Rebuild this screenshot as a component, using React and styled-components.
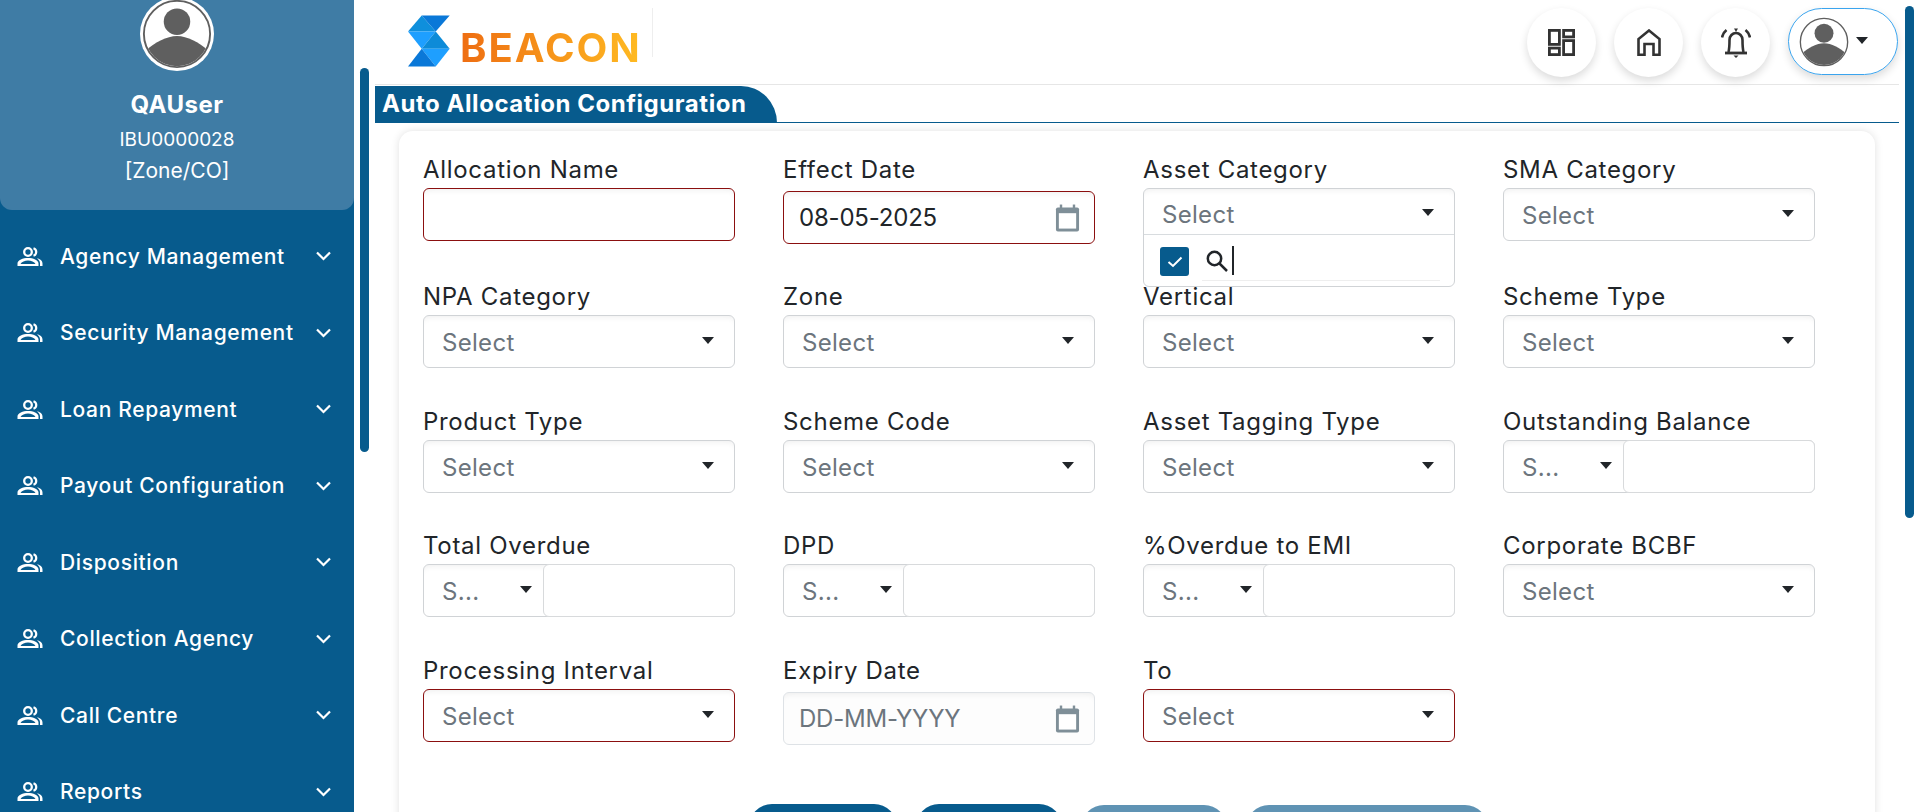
import styled, { createGlobalStyle } from "styled-components";

const GlobalStyle = createGlobalStyle`
  html, body { margin: 0; padding: 0; height: 100%; overflow: hidden; background: #fff; }
  body { font-family: Inter, "Noto Sans", sans-serif; color: #212529; }
`;

const BLUE = "#075b8d";
const RED = "#8b0f0f";

const menuItems = [
  "Agency Management",
  "Security Management",
  "Loan Repayment",
  "Payout Configuration",
  "Disposition",
  "Collection Agency",
  "Call Centre",
  "Reports",
];

const fields = [
  { label: "Allocation Name", kind: "text", required: true },
  { label: "Effect Date", kind: "date", value: "08-05-2025", required: true },
  { label: "Asset Category", kind: "open" },
  { label: "SMA Category" },
  { label: "NPA Category" },
  { label: "Zone" },
  { label: "Vertical" },
  { label: "Scheme Type" },
  { label: "Product Type" },
  { label: "Scheme Code" },
  { label: "Asset Tagging Type" },
  { label: "Outstanding Balance", kind: "combo" },
  { label: "Total Overdue", kind: "combo" },
  { label: "DPD", kind: "combo" },
  { label: "%Overdue to EMI", kind: "combo" },
  { label: "Corporate BCBF" },
  { label: "Processing Interval", required: true },
  { label: "Expiry Date", kind: "date", placeholder: "DD-MM-YYYY" },
  { label: "To", required: true },
];

// the labels of these buttons sit below the fold
const buttons = [
  { width: 148 },
  { width: 146 },
  { width: 146, faded: true },
  { width: 242, faded: true },
];

const Page = styled.div`
  display: flex;
  width: 1920px;
  height: 812px;
  overflow: hidden;
`;

const Sidebar = styled.aside`
  width: 354px;
  flex: none;
  height: 812px;
  background: ${BLUE};
  color: #fff;
  overflow: hidden;
`;

const Profile = styled.div`
  height: 210px;
  background: #3f7ca5;
  border-radius: 0 0 12px 12px;
  display: flex;
  flex-direction: column;
  align-items: center;
`;

const AvatarRing = styled.div`
  width: 74px;
  height: 74px;
  border-radius: 50%;
  background: #fff;
  display: flex;
  align-items: center;
  justify-content: center;
  margin: -3px 0 19px;
  flex: none;
`;

const UserName = styled.div`
  font-size: 24px;
  font-weight: 700;
  line-height: 30px;
  letter-spacing: 0.5px;
`;

const UserCode = styled.div`
  font-size: 19px;
  line-height: 30px;
  margin-top: 5px;
`;

const UserZone = styled.div`
  font-size: 21px;
  line-height: 30px;
  margin-top: 1px;
`;

const Menu = styled.nav`
  display: flex;
  flex-direction: column;
  padding-top: 8px;
`;

const MenuItem = styled.div`
  height: 76.5px;
  display: flex;
  align-items: center;
  padding: 0 23px 0 17px;
  flex: none;
`;

const MenuLabel = styled.span`
  flex: 1;
  font-size: 21px;
  font-weight: 500;
  letter-spacing: 0.65px;
  margin-left: 17px;
  white-space: nowrap;
`;

const Rail = styled.div`
  width: 9px;
  flex: none;
  margin-left: 6px;
  padding-top: ${(p) => p.$top}px;
`;

const Thumb = styled.div`
  width: 9px;
  height: ${(p) => p.$height}px;
  border-radius: 5px;
  background: ${BLUE};
`;

const Content = styled.div`
  width: 1524px;
  flex: none;
  margin-left: 6px;
`;

const Header = styled.header`
  height: 85px;
  border-bottom: 1px solid #e6e6e6;
  display: flex;
  align-items: flex-start;
  justify-content: space-between;
  box-sizing: border-box;
  padding: 8px 1px 0 33px;
`;

const Logo = styled.div`
  display: flex;
  align-items: flex-end;
  height: 59px;
`;

const LogoMark = styled.svg`
  flex: none;
  display: block;
`;

const LogoText = styled.span`
  font-size: 40px;
  line-height: 30px;
  font-weight: 700;
  letter-spacing: 2px;
  margin: 0 10px 4px 10px;
  background: linear-gradient(90deg, #ee6d12, #ffbb22);
  -webkit-background-clip: text;
  background-clip: text;
  color: transparent;
`;

const LogoDivider = styled.span`
  width: 1px;
  height: 49px;
  align-self: flex-start;
  background: #eee;
`;

const HeaderActions = styled.div`
  display: flex;
  align-items: flex-start;
  gap: 18px;
`;

const RoundButton = styled.div`
  width: 69px;
  height: 69px;
  border-radius: 50%;
  background: #fff;
  box-shadow: 0 4px 8px rgba(0, 0, 0, 0.14);
  display: flex;
  align-items: center;
  justify-content: center;
`;

const UserButton = styled.div`
  width: 110px;
  height: 67px;
  border-radius: 34px;
  border: 1px solid #3aa4ee;
  box-shadow: 0 4px 8px rgba(0, 0, 0, 0.14);
  display: flex;
  align-items: center;
  padding-left: 10px;
  box-sizing: border-box;
  gap: 7px;
`;

const TitleBar = styled.div`
  height: 37px;
  margin-top: 1px;
  border-bottom: 1px solid ${BLUE};
  box-sizing: border-box;
  display: flex;
`;

const TitleTab = styled.h1`
  margin: 0;
  height: 37px;
  width: 402px;
  flex: none;
  box-sizing: border-box;
  background: ${BLUE};
  color: #fff;
  font-size: 24px;
  line-height: 35px;
  font-weight: 700;
  letter-spacing: 0.55px;
  padding-left: 7px;
  border-top-right-radius: 36px 37px;
  white-space: nowrap;
`;

const Card = styled.section`
  width: 1476px;
  margin: 8px 0 0 24px;
  height: 700px;
  box-sizing: border-box;
  background: #fff;
  border-radius: 14px;
  box-shadow: 0 0 8px rgba(0, 0, 0, 0.12);
  padding: 24px 24px 0;
`;

const FieldGrid = styled.div`
  display: grid;
  grid-template-columns: repeat(4, 312px);
  grid-template-rows: 127px 125px 124px 125px 125px;
  column-gap: 48px;
`;

const Field = styled.div`
  display: flex;
  flex-direction: column;
  position: relative;
`;

const Label = styled.label`
  font-size: 24px;
  line-height: 30px;
  height: 33px;
  flex: none;
  letter-spacing: 0.7px;
  font-weight: 400;
  color: #212529;
  white-space: nowrap;
`;

const Control = styled.div`
  height: 53px;
  flex: none;
  box-sizing: border-box;
  border: 1px solid ${(p) => (p.$required ? RED : p.$muted ? "#dee2e6" : "#d0d3d6")};
  border-radius: 6px;
  background: ${(p) => (p.$muted ? "#fdfdfd" : "#fff")};
  display: flex;
  align-items: center;
  margin-top: ${(p) => (p.$date ? 3 : 0)}px;
  box-shadow: inset 0 6px 6px -5px rgba(0, 0, 0, 0.07);
`;

const SelectText = styled.span`
  flex: 1;
  font-size: 24px;
  letter-spacing: 0.3px;
  color: #6c757d;
  padding: 2px 0 0 18px;
  white-space: nowrap;
`;

const DateText = styled.span`
  flex: 1;
  font-size: 24px;
  letter-spacing: -0.2px;
  color: ${(p) => (p.$muted ? "#6c757d" : "#212529")};
  padding-left: 15px;
  white-space: nowrap;
`;

const Caret = styled.span`
  width: 0;
  height: 0;
  flex: none;
  border-left: 6px solid transparent;
  border-right: 6px solid transparent;
  border-top: 7px solid #212529;
  margin-right: ${(p) => p.$right ?? 20}px;
  margin-top: -2px;
`;

const ComboSelect = styled.div`
  width: 119px;
  flex: none;
  height: 100%;
  display: flex;
  align-items: center;
`;

const ComboInput = styled.div`
  flex: 1;
  height: 53px;
  box-sizing: border-box;
  border: 1px solid #d8dadc;
  border-radius: 6px;
  margin-right: -1px;
  background: #fff;
`;

const Dropdown = styled.div`
  position: absolute;
  left: 0;
  right: 0;
  top: 33px;
  height: 99px;
  box-sizing: border-box;
  border: 1px solid #d0d3d6;
  border-radius: 6px;
  background: #fff;
  z-index: 2;
  box-shadow: inset 0 6px 6px -5px rgba(0, 0, 0, 0.07);
`;

const DropdownHead = styled.div`
  height: 46px;
  box-sizing: border-box;
  padding-top: 4px;
  display: flex;
  align-items: center;
  border-bottom: 1px solid #d8dcdf;
`;

const SearchRow = styled.div`
  display: flex;
  align-items: flex-start;
  padding: 11px 14px 0 16px;
`;

const Check = styled.span`
  width: 29px;
  height: 29px;
  flex: none;
  margin-top: 1px;
  background: ${BLUE};
  border-radius: 3px;
  display: flex;
  align-items: center;
  justify-content: center;
`;

const SearchBox = styled.div`
  flex: 1;
  height: 35px;
  box-sizing: border-box;
  margin-left: 13px;
  padding: 0 0 5px 4px;
  border-bottom: 1px solid #eee;
  display: flex;
  align-items: center;
  gap: 4px;
`;

const Cursor = styled.span`
  width: 2px;
  height: 29px;
  background: #212529;
`;

const Actions = styled.div`
  display: flex;
  align-items: flex-start;
  gap: 19px;
  margin-top: 23px;
  padding-left: 326px;
`;

const ActionButton = styled.button`
  width: ${(p) => p.$width}px;
  height: 46px;
  border: 0;
  border-radius: 23px;
  background: ${(p) => (p.$faded ? "#5f93b4" : BLUE)};
  margin-top: ${(p) => (p.$faded ? 1 : 0)}px;
`;

function Avatar({ size }) {
  return (
    <svg width={size} height={size} viewBox="0 0 74 74">
      <circle cx="37" cy="37" r="35" fill="#fff" stroke="#5f5f5f" strokeWidth="2" />
      <clipPath id={`clip${size}`}>
        <circle cx="37" cy="37" r="34" />
      </clipPath>
      <g clipPath={`url(#clip${size})`} fill="#5f5f5f">
        <circle cx="37" cy="24" r="14" />
        <path d="M4 54 C14 46 26 39 37 39 C48 39 60 46 70 54 L70 74 L4 74 Z" />
      </g>
    </svg>
  );
}

function PeopleIcon() {
  return (
    <svg width="26" height="19" viewBox="0 0 26 19" fill="none">
      <circle cx="11" cy="5" r="3.8" stroke="#fff" strokeWidth="2.3" />
      <path d="M16.5 1.2 A4 4 0 0 1 16.5 8.8" stroke="#fff" strokeWidth="2.2" />
      <path
        fillRule="evenodd"
        d="M0.5 19 V16.5 C0.5 13 6 11 11 11 C16 11 21.5 13 21.5 16.5 V19 Z M3.5 17 H18.5 C17.5 14.8 14 13.5 11 13.5 C8 13.5 4.5 14.8 3.5 17 Z"
        fill="#fff"
      />
      <path d="M20 11.2 C23 12 25.5 13.5 25.5 16.5 V19 H23 V16.5 C23 14.5 22 12.8 20 11.2 Z" fill="#fff" />
    </svg>
  );
}

function Chevron() {
  return (
    <svg width="15" height="10" viewBox="0 0 15 10" fill="none">
      <path d="M1 1.5 L7.5 8 L14 1.5" stroke="#fff" strokeWidth="2.2" />
    </svg>
  );
}

function LogoIcon() {
  return (
    <LogoMark width="42" height="52" viewBox="0 0 42 51">
      <polygon points="0,16 13.7,0 27.7,16" fill="#0f8fdc" />
      <polygon points="13.7,0 41.7,0 27.7,16" fill="#0a78d8" />
      <polygon points="0,16 27.7,16 13.7,33.3" fill="#1e9fff" />
      <polygon points="27.7,16 41.7,33.3 13.7,33.3" fill="#0d8bd8" />
      <polygon points="13.7,33.3 41.7,33.3 27.7,51" fill="#1e9fff" />
      <polygon points="13.7,33.3 0,51 27.7,51" fill="#0a78d8" />
    </LogoMark>
  );
}

function CalendarIcon() {
  const color = "#7f8f98";
  return (
    <svg width="25" height="28" viewBox="0 0 26 28" style={{ marginRight: 14 }}>
      <rect x="1" y="3" width="24" height="25" rx="2" fill={color} />
      <rect x="4" y="9" width="18" height="16" fill="#fff" />
      <rect x="5" y="0" width="2.5" height="4" fill={color} />
      <rect x="18.5" y="0" width="2.5" height="4" fill={color} />
    </svg>
  );
}

function DashboardIcon() {
  return (
    <svg width="27" height="27" viewBox="0 0 27 27" fill="none" stroke="#333" strokeWidth="2.8">
      <rect x="1.4" y="1.4" width="10" height="14" />
      <rect x="15.6" y="1.4" width="10" height="6.5" />
      <rect x="15.6" y="11.6" width="10" height="14" />
      <rect x="1.4" y="19.1" width="10" height="6.5" />
    </svg>
  );
}

function HomeIcon() {
  return (
    <svg width="24" height="27" viewBox="0 0 24 27" fill="none" stroke="#333" strokeWidth="2.6">
      <path d="M1.5 25.8 V10 L12 1.5 L22.5 10 V25.8 H16.5 V15 H7.5 V25.8 Z" />
    </svg>
  );
}

function BellIcon() {
  return (
    <svg width="30" height="30" viewBox="0 0 30 30" fill="none" stroke="#333" strokeWidth="2.6">
      <path d="M7.5 24 C8.5 20 8.5 16 8.5 12 C8.5 8 11.5 5 15 5 C18.5 5 21.5 8 21.5 12 C21.5 16 21.5 20 22.5 24" />
      <path d="M4 25 H26" strokeWidth="2.8" />
      <path d="M13 0.5 H17 L15 4 Z" fill="#333" stroke="none" />
      <path d="M12.5 27.5 H17.5 L15 30 Z" fill="#333" stroke="none" />
      <path d="M5.5 2 C3 4 1.5 6.5 1 9.5" />
      <path d="M24.5 2 C27 4 28.5 6.5 29 9.5" />
    </svg>
  );
}

function SearchIcon() {
  return (
    <svg width="22" height="22" viewBox="0 0 22 22" fill="none" stroke="#212529" strokeWidth="2.5">
      <circle cx="8.5" cy="8.5" r="6.7" />
      <path d="M13.5 13.5 L21 21" />
    </svg>
  );
}

function FormField({ field }) {
  const { label, kind, required, value, placeholder } = field;
  return (
    <Field>
      <Label>{label}</Label>
      {kind === "text" && <Control $required />}
      {kind === "date" && (
        <Control $required={required} $muted={!value} $date>
          <DateText $muted={!value}>{value || placeholder}</DateText>
          <CalendarIcon />
        </Control>
      )}
      {kind === "combo" && (
        <Control>
          <ComboSelect>
            <SelectText>S...</SelectText>
            <Caret $right={11} />
          </ComboSelect>
          <ComboInput />
        </Control>
      )}
      {kind === "open" && (
        <Dropdown>
          <DropdownHead>
            <SelectText>Select</SelectText>
            <Caret />
          </DropdownHead>
          <SearchRow>
            <Check>
              <svg width="16" height="12" viewBox="0 0 16 12" fill="none">
                <path d="M1.5 6 L6 10 L14.5 1.5" stroke="#fff" strokeWidth="2" />
              </svg>
            </Check>
            <SearchBox>
              <SearchIcon />
              <Cursor />
            </SearchBox>
          </SearchRow>
        </Dropdown>
      )}
      {!kind && (
        <Control $required={required}>
          <SelectText>Select</SelectText>
          <Caret />
        </Control>
      )}
    </Field>
  );
}

export default function App() {
  return (
    <>
      <GlobalStyle />
      <Page>
        <Sidebar>
          <Profile>
            <AvatarRing>
              <Avatar size={70} />
            </AvatarRing>
            <UserName>QAUser</UserName>
            <UserCode>IBU0000028</UserCode>
            <UserZone>[Zone/CO]</UserZone>
          </Profile>
          <Menu>
            {menuItems.map((item) => (
              <MenuItem key={item}>
                <PeopleIcon />
                <MenuLabel>{item}</MenuLabel>
                <Chevron />
              </MenuItem>
            ))}
          </Menu>
        </Sidebar>
        <Rail $top={68}>
          <Thumb $height={384} />
        </Rail>
        <Content>
          <Header>
            <Logo>
              <LogoIcon />
              <LogoText>BEACON</LogoText>
              <LogoDivider />
            </Logo>
            <HeaderActions>
              <RoundButton>
                <DashboardIcon />
              </RoundButton>
              <RoundButton>
                <HomeIcon />
              </RoundButton>
              <RoundButton>
                <BellIcon />
              </RoundButton>
              <UserButton>
                <Avatar size={50} />
                <Caret $right={0} />
              </UserButton>
            </HeaderActions>
          </Header>
          <TitleBar>
            <TitleTab>Auto Allocation Configuration</TitleTab>
          </TitleBar>
          <Card>
            <FieldGrid>
              {fields.map((field) => (
                <FormField key={field.label} field={field} />
              ))}
            </FieldGrid>
            <Actions>
              {buttons.map((b, i) => (
                <ActionButton key={i} $width={b.width} $faded={b.faded} />
              ))}
            </Actions>
          </Card>
        </Content>
        <Rail $top={6}>
          <Thumb $height={512} />
        </Rail>
      </Page>
    </>
  );
}
